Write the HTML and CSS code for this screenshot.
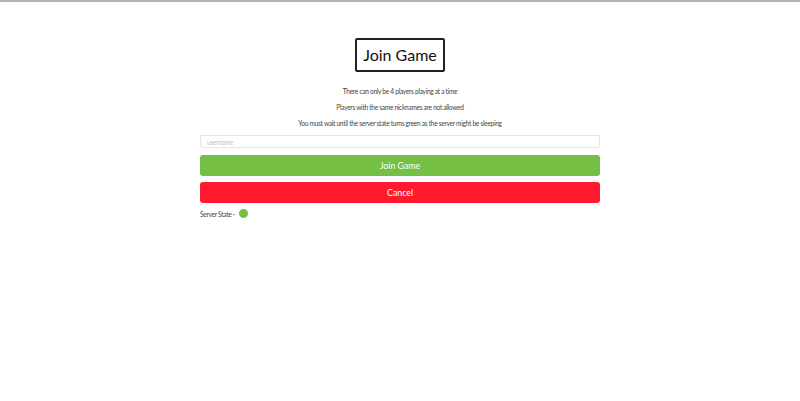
FILE: index.html
```html
<!DOCTYPE html>
<html>
<head>
<meta charset="utf-8">
<link rel="stylesheet" href="styles.css">
</head>
<body>
<div class="topbar"></div>
<main class="page">
  <h1 class="title">Join Game</h1>
  <p class="note">There can only be 4 players playing at a time</p>
  <p class="note">Players with the same nicknames are not allowed</p>
  <p class="note">You must wait until the server state turns green as the server might be sleeping</p>
  <form class="form">
    <input class="input" type="text" placeholder="username">
    <button type="button" class="btn btn-join">Join Game</button>
    <button type="button" class="btn btn-cancel">Cancel</button>
  </form>
  <div class="state"><span>Server State -</span><span class="dot"></span></div>
</main>
</body>
</html>
```
FILE: styles.css
```css
html, body {
  margin: 0;
  padding: 0;
  background: #fff;
}
body {
  font-family: Lato, "Open Sans", sans-serif;
  color: #222;
}
.topbar {
  height: 2px;
  background: #b5b5b5;
}
.page {
  width: 400px;
  margin: 0 auto;
  display: flex;
  flex-direction: column;
  align-items: center;
  padding-top: 36px;
}
.title {
  margin: 0;
  font-weight: 400;
  font-size: 16px;
  line-height: 30px;
  padding: 0 6px;
  border: 2px solid #222;
  border-radius: 2px;
  color: #111;
}
.note {
  margin: 0;
  font-size: 6.6px;
  letter-spacing: -0.3px;
  line-height: 16px;
  color: #444;
}
.title + .note {
  margin-top: 11px;
}
.form {
  width: 100%;
  display: flex;
  flex-direction: column;
  gap: 6px;
  margin-top: 4px;
}
.input {
  box-sizing: border-box;
  width: 100%;
  height: 13px;
  margin: 0 0 1px;
  border: 1px solid #e4e4e4;
  border-radius: 2px;
  padding: 0 6px;
  font-family: inherit;
  font-size: 6.6px;
  letter-spacing: -0.3px;
  outline: none;
}
.input::placeholder {
  color: #c4c4c4;
}
.btn {
  box-sizing: border-box;
  width: 100%;
  height: 21px;
  margin: 0;
  border: none;
  border-radius: 3px;
  color: #fff;
  font-family: inherit;
  font-size: 8.8px;
  padding: 0;
}
.btn-join {
  background: #74bf44;
}
.btn-cancel {
  background: #ff1a2f;
}
.state {
  align-self: flex-start;
  display: flex;
  align-items: center;
  gap: 4px;
  margin-top: 6px;
  font-size: 6.6px;
  letter-spacing: -0.3px;
  color: #444;
}
.dot {
  width: 9px;
  height: 9px;
  border-radius: 50%;
  background: #74bf44;
}
```
